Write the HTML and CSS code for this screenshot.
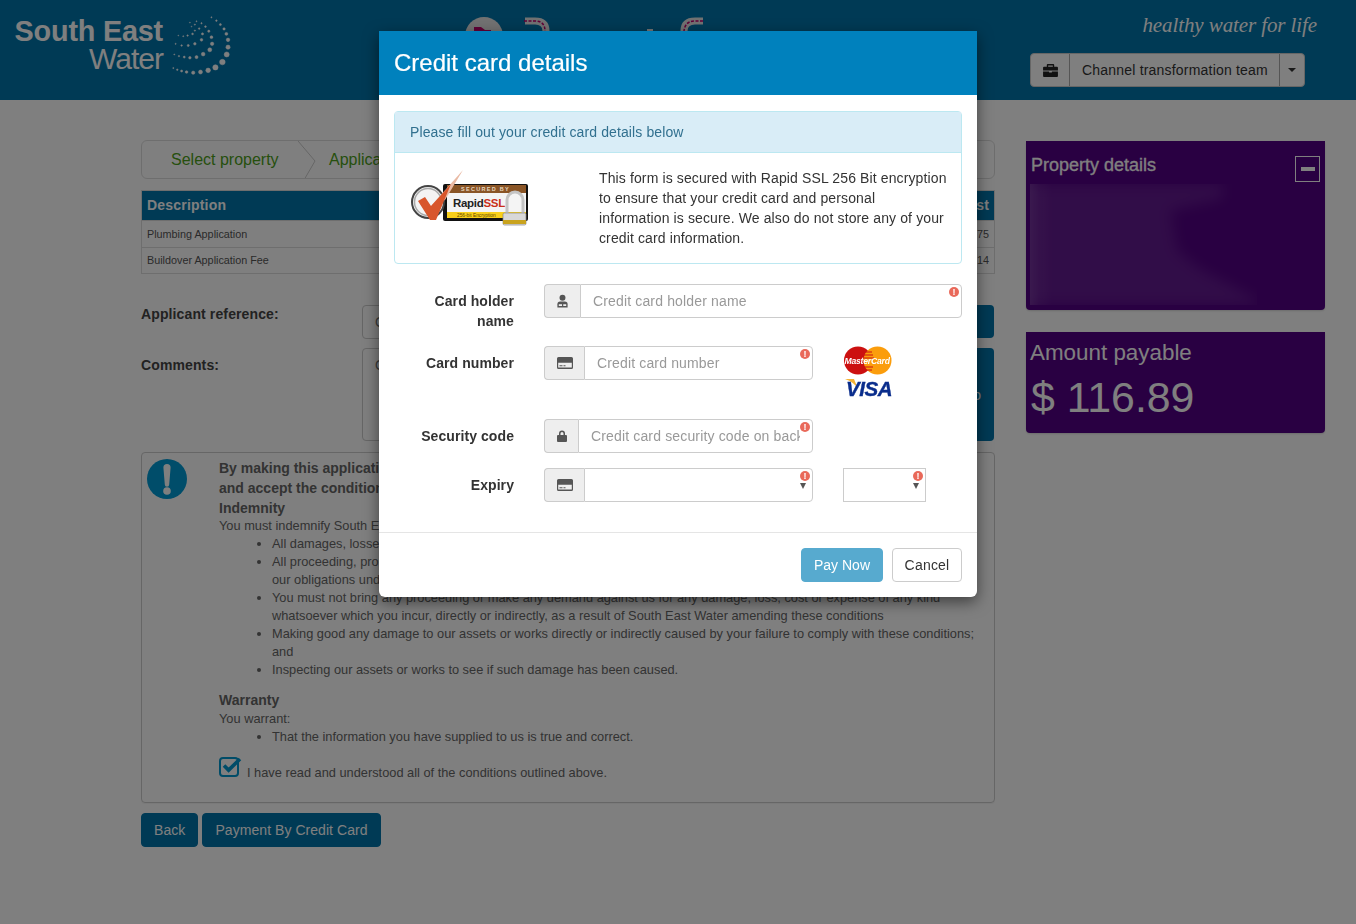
FILE: index.html
```html
<!DOCTYPE html>
<html lang="en">
<head>
<meta charset="utf-8">
<title>Credit card details</title>
<link rel="stylesheet" href="styles.css">
</head>
<body>
<header class="topbar">
  <div class="logo">
    <div class="logo-text"><span class="logo-south">South East</span><span class="logo-water">Water</span></div>
    <svg class="logo-dots" viewBox="505 40 190 190" aria-hidden="true">
      <g fill="#fff" stroke="#fff" stroke-width="1.500">
        <circle cx="630" cy="50" r="1.800"/><circle cx="645" cy="60" r="2.400"/><circle cx="657" cy="72" r="3"/><circle cx="668" cy="85" r="3.600"/><circle cx="675" cy="100" r="4.400"/><circle cx="680" cy="118" r="5.400"/><circle cx="680" cy="140" r="6.400"/><circle cx="676" cy="162" r="7.600"/><circle cx="663" cy="185" r="8.400"/><circle cx="642" cy="201" r="8"/><circle cx="620" cy="210" r="7"/><circle cx="597" cy="215" r="6"/><circle cx="575" cy="217" r="5"/><circle cx="555" cy="215" r="4"/><circle cx="540" cy="212" r="3.200"/><circle cx="527" cy="208" r="2.400"/><circle cx="515" cy="203" r="1.800"/>
        <circle cx="585" cy="62" r="1.600"/><circle cx="600" cy="68" r="2"/><circle cx="612" cy="78" r="2.600"/><circle cx="622" cy="92" r="3.400"/><circle cx="630" cy="110" r="4.200"/><circle cx="632" cy="130" r="5.200"/><circle cx="625" cy="148" r="6"/><circle cx="605" cy="161" r="5.600"/><circle cx="585" cy="170" r="4.600"/><circle cx="565" cy="172" r="3.800"/><circle cx="548" cy="170" r="3"/><circle cx="532" cy="167" r="2.200"/><circle cx="518" cy="162" r="1.600"/>
        <circle cx="565" cy="66" r="1.400"/><circle cx="580" cy="72" r="1.800"/><circle cx="593" cy="84" r="2.400"/><circle cx="603" cy="100" r="3.200"/><circle cx="600" cy="118" r="4"/><circle cx="580" cy="130" r="3.800"/><circle cx="560" cy="135" r="3.200"/><circle cx="540" cy="135" r="2.400"/><circle cx="522" cy="130" r="1.700"/>
        <circle cx="570" cy="78" r="1.400"/><circle cx="580" cy="90" r="2"/><circle cx="573" cy="100" r="2.600"/><circle cx="558" cy="105" r="2.200"/><circle cx="545" cy="107" r="1.700"/><circle cx="530" cy="105" r="1.300"/>
      </g>
    </svg>
  </div>
  <svg class="nav-art" viewBox="0 0 300 31" aria-hidden="true">
    <circle cx="44" cy="36" r="19" fill="#e4e4e4"/>
    <path d="M34 27h7l4 3h6v5H34z" fill="#c0006c"/>
    <path d="M85 21h10q11 0 11 10" fill="none" stroke="#e4e4e4" stroke-width="7"/>
    <path d="M84 21h11q10 0 10 10" fill="none" stroke="#c0006c" stroke-width="1.500" stroke-dasharray="3 1.500"/>
    <path d="M263 21h-8q-11 0-11 10" fill="none" stroke="#e4e4e4" stroke-width="7"/>
    <path d="M263 21h-8q-10 0-11 10" fill="none" stroke="#c0006c" stroke-width="1.500" stroke-dasharray="3 1.500"/>
    <rect x="207" y="29" width="6" height="2" fill="#e4e4e4"/>
  </svg>
  <div class="top-right">
    <div class="tagline">healthy water for life</div>
    <div class="team-group">
      <span class="team-icon">
        <svg class="ico-brief" viewBox="0 0 16 14" aria-hidden="true"><path fill="#222" fill-rule="evenodd" d="M5 0h6a1 1 0 0 1 1 1v2h3a1 1 0 0 1 1 1v3H0V4a1 1 0 0 1 1-1h3V1a1 1 0 0 1 1-1zm.5 1.500V3h5V1.500zM0 8h6.500v1.200h3V8H16v5a1 1 0 0 1-1 1H1a1 1 0 0 1-1-1z"/></svg>
      </span>
      <span class="team-name">Channel transformation team</span>
      <span class="team-caret"><i class="caret"></i></span>
    </div>
  </div>
</header>

<div class="page">
  <main class="content">
    <nav class="steps">
      <span class="step step-first">Select property
        <svg class="chevron" viewBox="0 0 18 39" aria-hidden="true"><path d="M0 0L17 20L6 39" fill="none" stroke="#ccc"/></svg>
      </span>
      <span class="step">Application details</span>
    </nav>
    <table class="fees">
      <thead><tr><th>Description</th><th class="cost">Cost</th></tr></thead>
      <tbody>
        <tr><td>Plumbing Application</td><td class="cost">$ 90.75</td></tr>
        <tr class="row-last"><td>Buildover Application Fee</td><td class="cost">$ 26.14</td></tr>
      </tbody>
    </table>
    <div class="ref-row">
      <label class="ref-label">Applicant reference:</label>
      <input class="ref-input" placeholder="Optional reference">
      <span class="ref-btn"></span>
    </div>
    <div class="ref-row comments-row">
      <label class="ref-label">Comments:</label>
      <textarea class="ref-input ref-area" placeholder="Optional comments"></textarea>
      <span class="ref-btn ref-btn-tall">Info</span>
    </div>
    <section class="terms">
      <svg class="terms-icon" viewBox="0 0 40 40" aria-hidden="true"><circle cx="20" cy="20" r="20" fill="#009ad4"/><path fill="#fff" d="M16.400 8.500a3.600 3.600 0 0 1 7.200 0l-1.400 17a2.200 2.200 0 0 1-4.400 0z"/><circle cx="20" cy="32" r="3.800" fill="#fff"/></svg>
      <div class="terms-body">
        <p class="terms-lead">By making this application you confirm that you have read<br>and accept the conditions outlined below</p>
        <h4>Indemnity</h4>
        <p>You must indemnify South East Water against:</p>
        <ul>
          <li>All damages, losses and costs that we incur;</li>
          <li>All proceeding, prosecutions and claims arising from a breach of<br>our obligations under these conditions</li>
          <li>You must not bring any proceeding or make any demand against us for any damage, loss, cost or expense of any kind<br>whatsoever which you incur, directly or indirectly, as a result of South East Water amending these conditions</li>
          <li>Making good any damage to our assets or works directly or indirectly caused by your failure to comply with these conditions;<br>and</li>
          <li>Inspecting our assets or works to see if such damage has been caused.</li>
        </ul>
        <h4 class="warranty">Warranty</h4>
        <p>You warrant:</p>
        <ul><li>That the information you have supplied to us is true and correct.</li></ul>
        <div class="agree">
          <svg class="agree-box" viewBox="0 0 24 21" aria-hidden="true"><rect x="1" y="2" width="18" height="18" rx="3" fill="none" stroke="#0098d0" stroke-width="2"/><path d="M5 9.500l4.600 4.600L21 3" fill="none" stroke="#0098d0" stroke-width="3.600"/></svg>
          <span>I have read and understood all of the conditions outlined above.</span>
        </div>
      </div>
    </section>
    <div class="actions">
      <button class="btn-dark" type="button">Back</button>
      <button class="btn-dark" type="button">Payment By Credit Card</button>
    </div>
  </main>
  <aside class="side">
    <section class="panel panel-property">
      <div class="panel-head">
        <h3>Property details</h3>
        <span class="collapse"><i></i></span>
      </div>
      <div class="redacted"><div class="redacted-blur"><div class="redacted-shape"></div></div></div>
    </section>
    <section class="panel panel-amount">
      <h3>Amount payable</h3>
      <div class="amount">$ 116.89</div>
    </section>
  </aside>
</div>

<div class="backdrop"></div>

<div class="modal">
  <div class="modal-head"><h2>Credit card details</h2></div>
  <div class="modal-body">
    <div class="info">
      <div class="info-head">Please fill out your credit card details below</div>
      <div class="info-body">
        <svg class="ssl" viewBox="0 0 120 60" role="img" aria-label="Secured by RapidSSL">
          <rect x="32" y="16" width="85" height="37" rx="2" fill="#111"/>
          <rect x="36" y="17" width="79" height="8" fill="#8a5526"/>
          <rect x="36" y="25" width="79" height="19" fill="#f4f4f4"/>
          <rect x="36" y="44" width="79" height="6" fill="#f8cf1a"/>
          <circle cx="17" cy="34" r="16" fill="#f4f4f4" stroke="#444" stroke-width="2"/>
          <circle cx="17" cy="34" r="13.500" fill="none" stroke="#aaa" stroke-width="1.500"/>
          <path d="M20 38L52 2L34 32z" fill="#e9b9a3"/>
          <path d="M7 33L14 29L20 38L40 16L25 52H19z" fill="#d8562c"/>
          <text class="ssl-sec" x="50" y="23.200">SECURED BY</text>
          <text class="ssl-name" x="42" y="39">Rapid<tspan fill="#c8301a">SSL</tspan></text>
          <text class="ssl-enc" x="46" y="49">256-bit Encryption</text>
          <path d="M96 45V32a8 8 0 0 1 16 0v13" fill="none" stroke="#c4c4c4" stroke-width="3"/>
          <rect x="92" y="45" width="23" height="12" rx="1.500" fill="#d8d8d8" stroke="#888" stroke-width=".7"/>
          <path d="M92 52h23v4H92z" fill="#c9a31e"/>
        </svg>
        <p>This form is secured with Rapid SSL 256 Bit encryption to ensure that your credit card and personal information is secure. We also do not store any of your credit card information.</p>
      </div>
    </div>
    <form class="card-form">
      <div class="form-row row-holder">
        <label class="form-label">Card holder name</label>
        <div class="field field-wide">
          <span class="addon addon-36">
            <svg class="ico" viewBox="0 0 14 14" aria-hidden="true"><circle cx="7" cy="3.500" r="3.200" fill="#555"/><path fill="#555" d="M1.500 14v-3.500q0-3 3-3h5q3 0 3 3V14z"/><path d="M3 10.500h3.500v2H3zM7.800 10.500h3.200v2H7.800z" fill="#eee"/></svg>
          </span>
          <input class="input" placeholder="Credit card holder name">
          <i class="err">!</i>
        </div>
      </div>
      <div class="form-row row-number">
        <label class="form-label">Card number</label>
        <div class="field field-mid">
          <span class="addon addon-40">
            <svg class="ico ico-card" viewBox="0 0 16 12" aria-hidden="true"><path fill="#555" fill-rule="evenodd" d="M1.500 0h13A1.500 1.500 0 0 1 16 1.500v9a1.500 1.500 0 0 1-1.500 1.500h-13A1.500 1.500 0 0 1 0 10.500v-9A1.500 1.500 0 0 1 1.500 0zM1.200 5.800v4.800h13.600V5.800zM2.500 8.200h3v1h-3zM6.500 8.200h2v1h-2z"/></svg>
          </span>
          <input class="input" placeholder="Credit card number">
          <i class="err">!</i>
        </div>
        <svg class="brands" viewBox="0 0 49 54" role="img" aria-label="MasterCard and Visa">
          <circle cx="14" cy="14.500" r="14" fill="#cc1010"/>
          <circle cx="33.500" cy="14.500" r="14" fill="#fb9d0c"/>
          <path d="M21 6h7M20 9h9M20 12h10M20 21h9M21 24h7" stroke="#cc1010" stroke-width="1"/>
          <text class="mc-text" x="0.500" y="17.500">MasterCard</text>
          <path d="M1 33h9l4 10q-4-7-13-10z" fill="#f5b335"/>
          <text class="visa-text" x="2" y="50">VISA</text>
        </svg>
      </div>
      <div class="form-row">
        <label class="form-label">Security code</label>
        <div class="field field-mid">
          <span class="addon addon-34">
            <svg class="ico ico-lock" viewBox="0 0 10 12" aria-hidden="true"><path fill="#555" fill-rule="evenodd" d="M2 5V3.500a3 3 0 0 1 6 0V5h1a1 1 0 0 1 1 1v5a1 1 0 0 1-1 1H1a1 1 0 0 1-1-1V6a1 1 0 0 1 1-1zm1.500 0h3V3.500a1.500 1.500 0 0 0-3 0z"/></svg>
          </span>
          <input class="input" placeholder="Credit card security code on back">
          <i class="err">!</i>
        </div>
      </div>
      <div class="form-row">
        <label class="form-label">Expiry</label>
        <div class="field field-mid">
          <span class="addon addon-40">
            <svg class="ico ico-card" viewBox="0 0 16 12" aria-hidden="true"><path fill="#555" fill-rule="evenodd" d="M1.500 0h13A1.500 1.500 0 0 1 16 1.500v9a1.500 1.500 0 0 1-1.500 1.500h-13A1.500 1.500 0 0 1 0 10.500v-9A1.500 1.500 0 0 1 1.500 0zM1.200 5.800v4.800h13.600V5.800zM2.500 8.200h3v1h-3zM6.500 8.200h2v1h-2z"/></svg>
          </span>
          <select class="input select" aria-label="Expiry month"><option></option></select>
          <i class="err">!</i><i class="arrow"></i>
        </div>
        <div class="field field-year">
          <select class="input select select-year" aria-label="Expiry year"><option></option></select>
          <i class="err">!</i><i class="arrow"></i>
        </div>
      </div>
    </form>
  </div>
  <div class="modal-foot">
    <button class="btn-pay" type="button">Pay Now</button>
    <button class="btn-cancel" type="button">Cancel</button>
  </div>
</div>
</body>
</html>
```

FILE: styles.css
```css
* { box-sizing: border-box; }
html, body { margin: 0; padding: 0; }
body {
  background: #fff;
  color: #333;
  font-family: "Liberation Sans", Arial, sans-serif;
  font-size: 14px;
  line-height: 20px;
  height: 924px;
  overflow: hidden;
}
h2, h3, h4, p, ul { margin: 0; padding: 0; }

/* top bar */
.topbar { height: 100px; background: #0074aa; display: flex; position: relative; }
.logo { display: flex; width: 231px; padding: 16px 0 0 15px; }
.logo-text { display: flex; flex-direction: column; align-items: flex-end; width: 148px; flex: none; color: #fff; white-space: nowrap; }
.logo-south { font-size: 28.800px; font-weight: 700; line-height: 31px; letter-spacing: -.2px; }
.logo-water { font-size: 30px; line-height: 24px; letter-spacing: -1px; }
.logo-dots { width: 63px; height: 63px; margin: -2px 0 0 7px; flex: none; }
.nav-art { width: 300px; height: 31px; margin-left: 209px; flex: none; }
.top-right { margin-left: auto; width: 300px; padding-right: 51px; display: flex; flex-direction: column; align-items: flex-end; }
.tagline { font-family: "Liberation Serif", serif; font-style: italic; font-size: 21px; line-height: 28px; color: #fff; margin: 11px -12px 0 0; letter-spacing: -.1px; }
.team-group { margin-top: 14px; display: flex; height: 34px; width: 275px; flex: none; background: #fff; border: 1px solid #ccc; border-radius: 4px; color: #333; align-items: stretch; }
.team-icon { width: 39px; display: flex; align-items: center; justify-content: center; border-right: 1px solid #aaa; }
.ico-brief { width: 15px; height: 13px; }
.team-name { flex: 1; padding: 6px 0 0 12px; white-space: nowrap; letter-spacing: .2px; }
.team-caret { width: 25px; border-left: 1px solid #aaa; display: flex; align-items: center; justify-content: center; }
.caret { border-top: 4px solid #333; border-left: 4px solid transparent; border-right: 4px solid transparent; }

/* page */
.page { display: flex; gap: 30px; padding: 40px 31px 0 141px; }
.content { width: 854px; flex: none; }
.steps { height: 39px; border: 1px solid #ddd; border-radius: 6px; display: flex; align-items: center; color: #4da01a; font-size: 16px; overflow: hidden; }
.step { padding: 0 0 0 29px; white-space: nowrap; position: relative; }
.step-first { width: 158px; height: 100%; display: flex; align-items: center; }
.chevron { position: absolute; left: 156px; top: 0; width: 18px; height: 39px; }
.fees { width: 100%; border-collapse: collapse; margin-top: 11px; font-size: 10.800px; }
.fees th { background: #0074aa; color: #fff; text-align: left; font-size: 14px; letter-spacing: .2px; height: 30px; padding: 0 5px 2px; border: 1px solid #ddd; border-bottom: 0; }
.fees td { height: 27px; padding: 0 5px; border: 1px solid #ddd; color: #555; }
.fees .row-last td { height: 26px; padding-bottom: 1px; }
.fees .cost { text-align: right; }
.ref-row { display: flex; margin-top: 31px; height: 34px; align-items: flex-start; }
.comments-row { margin-top: 9px; height: 93px; }
.ref-label { width: 221px; font-weight: 700; color: #444; line-height: 18px; letter-spacing: .12px; }
.comments-row .ref-label { padding-top: 8px; }
.ref-input { width: 500px; height: 34px; border: 1px solid #ccc; border-radius: 4px; padding: 6px 12px; font: inherit; background: #fff; resize: none; }
.ref-area { height: 93px; }
.ref-btn { width: 133px; height: 33px; background: #0074aa; border-radius: 4px; margin-left: -1px; }
.ref-btn-tall { height: 93px; color: #fff; display: flex; align-items: center; justify-content: flex-end; padding-right: 13px; }
.terms { margin-top: 11px; height: 351px; border: 1px solid #ccc; border-radius: 4px; box-shadow: 0 1px 1px rgba(0,0,0,.05); display: flex; padding: 5px 0 0 5px; font-size: 12.800px; line-height: 18px; color: #666; }
.terms-icon { width: 40px; height: 40px; margin-top: 1px; flex: none; }
.terms-body { margin-left: 32px; flex: 1; }
.terms-lead, .terms-body h4 { font-size: 14px; line-height: 20px; font-weight: 700; color: #666; }
.terms-body h4 + p { margin-top: -1px; }
.terms-body .warranty + p { margin-top: 0; }
.terms-body ul { list-style: disc; padding-left: 53px; }
.warranty { margin-top: 11px; }
.agree { display: flex; align-items: flex-end; margin-top: 10px; }
.agree-box { width: 24px; height: 21px; margin-right: 4px; }
.agree span { line-height: 18px; margin-bottom: -5px; }
.actions { display: flex; gap: 4px; margin-top: 10px; }
.btn-dark { height: 34px; padding: 0 12px; background: #0074aa; color: #fff; border: 1px solid #0074aa; border-radius: 4px; font: inherit; letter-spacing: .05px; }
.actions .btn-dark:first-child { width: 57px; }
.actions .btn-dark:last-child { width: 179px; }

/* sidebar */
.side { width: 299px; flex: none; padding-top: 1px; margin-left: 1px; }
.panel { background: #520084; color: #fff; border-radius: 0 0 4px 4px; box-shadow: 0 1px 2px rgba(0,0,0,.15); }
.panel-property { height: 169px; padding: 14px 5px 0 4px; }
.panel-head { display: flex; justify-content: space-between; height: 29px; }
.panel-head h3 { font-size: 18px; line-height: 20px; font-weight: 400; -webkit-text-stroke: .3px #fff; padding-left: 1px; }
.collapse { width: 25px; height: 26px; margin-top: 1px; border: 1px solid #fff; display: flex; align-items: center; justify-content: center; flex: none; }
.collapse i { width: 14px; height: 4px; background: #fff; }
.redacted { width: 227px; height: 121px; overflow: hidden; background: linear-gradient(90deg, rgba(255,255,255,.16), rgba(255,255,255,.05) 4%, transparent 10%); }
.redacted-blur { width: 100%; height: 100%; filter: blur(7px); }
.redacted-shape { width: 100%; height: 100%; background: rgba(255,255,255,.1); clip-path: polygon(0 0, 85% 0, 85% 12%, 62% 22%, 65% 55%, 75% 70%, 100% 95%, 100% 100%, 0 100%); }
.panel-amount { height: 101px; margin-top: 22px; padding: 8px 4px; }
.panel-amount h3 { font-size: 22.400px; line-height: 26px; font-weight: 400; }
.amount { font-size: 42.800px; line-height: 48px; margin-top: 7px; padding-left: 1px; }

/* overlay */
.backdrop { position: fixed; inset: 0; background: rgba(0,0,0,.5); }
.modal { position: absolute; left: 379px; top: 31px; width: 598px; height: 566px; background: #fff; border-radius: 0 0 6px 6px; box-shadow: 0 5px 15px rgba(0,0,0,.5); display: flex; flex-direction: column; }
.modal-head { height: 64px; background: #0081bd; color: #fff; padding: 16px 15px 0; }
.modal-head h2 { font-size: 24px; line-height: 32px; font-weight: 400; -webkit-text-stroke: .2px #fff; }
.modal-body { flex: 1; padding: 16px 15px 0; }
.info { border: 1px solid #bce8f1; border-radius: 4px; height: 153px; }
.info-head { height: 41px; background: #d9edf7; color: #31708f; border-bottom: 1px solid #bce8f1; padding: 10px 15px; letter-spacing: .11px; }
.info-body { display: flex; padding: 15px 13px 0 16px; }
.ssl { width: 120px; height: 60px; flex: none; }
.ssl-sec { font-size: 5.500px; fill: #e8d8c0; letter-spacing: 1.300px; font-weight: 700; }
.ssl-name { font-size: 11.500px; font-weight: 700; fill: #222; letter-spacing: -.3px; }
.ssl-enc { font-size: 4.800px; fill: #5a4500; }
.info-body p { margin: 0 0 0 68px; flex: 1; min-width: 0; color: #333; letter-spacing: .12px; }
.card-form { margin-top: 20px; }
.form-row { display: flex; align-items: flex-start; margin-bottom: 15px; min-height: 34px; }
.row-holder { height: 47px; }
.row-number { height: 58px; }
.form-label { width: 120px; margin-right: 30px; flex: none; text-align: right; font-weight: 700; padding-top: 7px; color: #333; letter-spacing: .08px; }
.field { display: flex; position: relative; height: 34px; }
.field-wide { width: 418px; }
.field-mid { width: 269px; }
.field-year { width: 83px; margin-left: 30px; }
.addon { flex: none; background: #eee; border: 1px solid #ccc; border-right: 0; border-radius: 4px 0 0 4px; display: flex; align-items: center; justify-content: center; }
.addon-36 { width: 36px; }
.addon-40 { width: 40px; }
.addon-34 { width: 34px; }
.ico { width: 13px; height: 14px; }
.ico-card { width: 16px; height: 12px; }
.ico-lock { width: 10px; height: 12px; }
.input { flex: 1; min-width: 0; width: 100%; height: 34px; border: 1px solid #ccc; border-radius: 0 4px 4px 0; padding: 6px 12px; font: inherit; letter-spacing: .15px; color: #555; background: #fff; }
.input::placeholder { color: #999; opacity: 1; }
.select { appearance: none; padding: 0; }
.select-year { border-radius: 0; }
.err { position: absolute; right: 3px; top: 3px; width: 10px; height: 10px; border-radius: 50%; background: #e9695a; color: #fff; font: 700 9px/10px "Liberation Sans", sans-serif; text-align: center; }
.arrow { position: absolute; right: 7px; top: 15px; border-top: 6px solid #555; border-left: 3px solid transparent; border-right: 3px solid transparent; }
.brands { width: 49px; height: 54px; margin-left: 31px; flex: none; overflow: visible; }
.mc-text { font-size: 8.600px; font-weight: 700; font-style: italic; fill: #fff; letter-spacing: -.2px; }
.visa-text { font-size: 20.500px; font-weight: 700; font-style: italic; fill: #0a2d8c; stroke: #0a2d8c; stroke-width: .4px; letter-spacing: -.4px; }
.modal-foot { height: 65px; border-top: 1px solid #e5e5e5; display: flex; justify-content: flex-end; gap: 9px; padding: 15px 15px 0; }
.btn-pay { width: 82px; height: 34px; background: #57aacf; border: 1px solid #57aacf; border-radius: 4px; color: #fff; font: inherit; }
.btn-cancel { width: 70px; height: 34px; background: #fff; border: 1px solid #ccc; border-radius: 4px; color: #333; font: inherit; letter-spacing: .2px; }
```
